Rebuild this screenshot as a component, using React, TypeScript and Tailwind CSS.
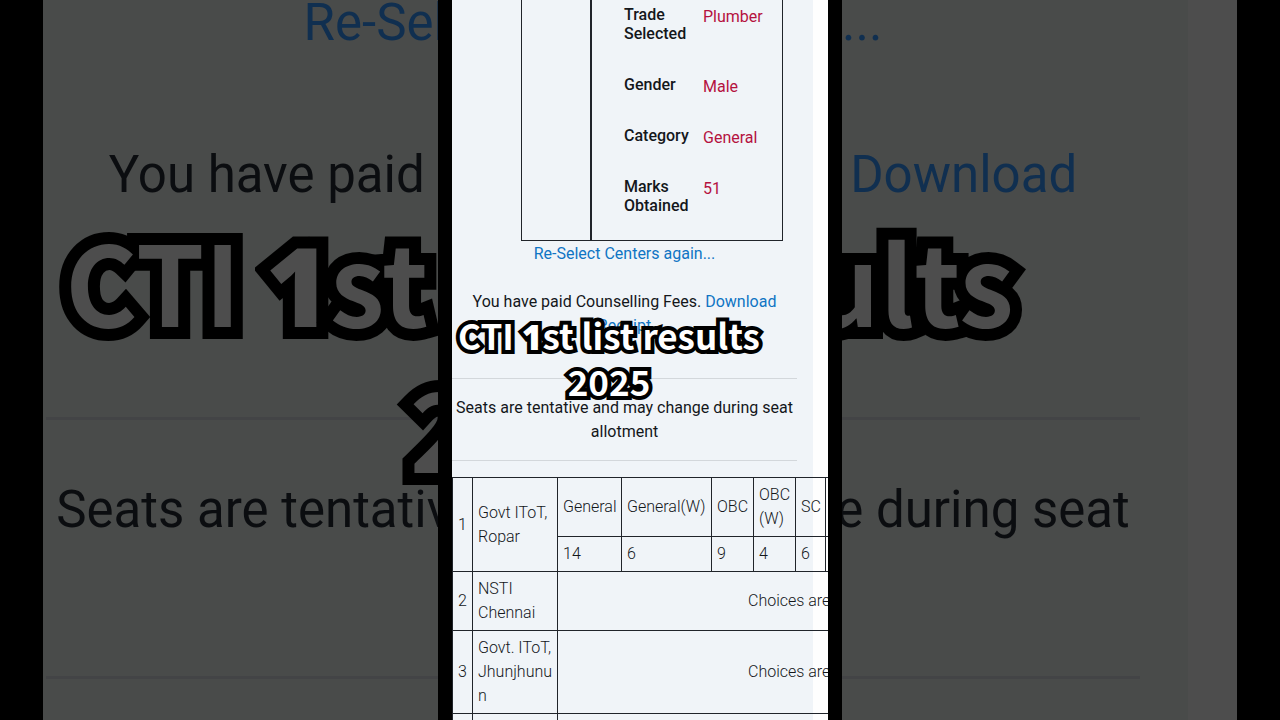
import { clsx } from 'clsx';

const applicant = [
  { label: 'Trade Selected', value: 'Plumber' },
  { label: 'Gender', value: 'Male' },
  { label: 'Category', value: 'General' },
  { label: 'Marks Obtained', value: '51' },
];

const seats = [
  { quota: 'General', count: 14, width: 'w-[64px]' },
  { quota: 'General(W)', count: 6, width: 'w-[90px]' },
  { quota: 'OBC', count: 9, width: 'w-[42px]' },
  { quota: 'OBC (W)', count: 4, width: 'w-[42px]' },
  { quota: 'SC', count: 6, width: 'w-[30px]' },
  { quota: '', count: '', width: 'w-[41px]' },
];

const otherCenters = [
  { no: 2, name: 'NSTI Chennai' },
  { no: 3, name: 'Govt. IToT, Jhunjhunun' },
];

const Caption = ({ className }: { className: string }) => (
  <p
    className={clsx(
      "absolute text-center font-['Noto_Sans_CJK_SC',sans-serif] font-bold [paint-order:stroke_fill] whitespace-nowrap",
      className
    )}
  >
    CTI <span className="font-['Open_Sans',sans-serif] font-extrabold">1</span>st list results
    <br />
    2025
  </p>
);

const ApplicantTable = () => (
  <div className="ml-[69px] flex w-[262px] border border-t-0 border-[#20242a]">
    <div className="w-[70px] border-r-2 border-[#20242a]" />
    <table className="mb-[9px] ml-8 border-collapse text-left">
      <tbody>
        {applicant.map(({ label, value }, i) => (
          <tr key={label} className="align-top">
            <th
              scope="row"
              className={clsx('w-[79px] pr-3 pb-4 leading-[19px] font-medium', i === 0 ? 'pt-[5px]' : 'pt-4')}
            >
              {label}
            </th>
            <td className={clsx('pb-2 leading-6 text-[#b5123f]', i === 0 ? 'pt-[5px]' : 'pt-4')}>{value}</td>
          </tr>
        ))}
      </tbody>
    </table>
  </div>
);

const SeatTable = () => (
  <table className="mt-4 w-[414px] table-fixed border-collapse font-light [&_td]:border [&_td]:border-[#20242a] [&_td]:p-[5px]">
    <colgroup>
      <col className="w-5" />
      <col className="w-[85px]" />
      {seats.map(({ quota, width }) => (
        <col key={quota} className={width} />
      ))}
    </colgroup>
    <tbody>
      <tr>
        <td rowSpan={2}>1</td>
        <td rowSpan={2}>Govt IToT, Ropar</td>
        {seats.map(({ quota }) => (
          <td key={quota}>{quota}</td>
        ))}
      </tr>
      <tr>
        {seats.map(({ quota, count }) => (
          <td key={quota}>{count}</td>
        ))}
      </tr>
      {otherCenters.map(({ no, name }) => (
        <tr key={no}>
          <td>{no}</td>
          <td className="break-words">{name}</td>
          <td colSpan={6}>
            <span className="pl-[185px] whitespace-nowrap">Choices are</span>
          </td>
        </tr>
      ))}
      <tr className="h-[59px]">
        <td />
        <td />
        <td colSpan={6} />
      </tr>
    </tbody>
  </table>
);

const CounsellingPage = () => (
  <main className="relative h-screen w-[404px] overflow-hidden border-x-[14px] border-black bg-[#fefefe] text-base leading-6 text-[#14171b]">
    <div className="h-full w-[361px] bg-[#f0f4f8]">
      <div className="w-[345px] text-center">
        <ApplicantTable />
        <a href="#centers" className="mt-px block text-[#0f75c4]">
          Re-Select Centers again...
        </a>
        <p className="mt-6">
          You have paid Counselling Fees.{' '}
          <a href="#receipt" className="text-[#0f75c4]">
            Download
            <br />
            Receipt
          </a>
        </p>
        <hr className="mt-10 mb-[17px] border-[#d3d7db]" />
        <p>
          Seats are tentative and may change during seat
          <br />
          allotment
        </p>
        <hr className="mt-4 border-[#d3d7db]" />
      </div>
      <SeatTable />
    </div>
    <Caption className="top-[313px] left-0 w-[314px] text-[35px] leading-[44px] text-white [-webkit-text-stroke:8px_black]" />
  </main>
);

// Enlarged, dimmed copy of the page that fills the space beside it
const Backdrop = () => (
  <div
    aria-hidden="true"
    className="relative h-screen w-full max-w-[1194px] overflow-hidden bg-[#4d4d4d] text-[51px] leading-[76px] text-[#0b0d10]"
  >
    <div className="mr-[49px] h-full overflow-hidden bg-[#494b4a]">
      <div className="-mt-[15px] mr-12 ml-[3px] flex flex-col text-center whitespace-nowrap">
        <p className="text-[#102f50]">Re-Select Centers again...</p>
        <p className="mt-[76px]">
          You have paid Counselling Fees. <span className="text-[#102f50]">Download</span>
        </p>
        <hr className="mt-[204px] mb-[52px] border-t-[3px] border-[#434446]" />
        <p>Seats are tentative and may change during seat</p>
        <hr className="mt-[128px] border-t-[3px] border-[#434446]" />
      </div>
    </div>
    <Caption className="top-[209px] left-0 w-[993px] text-[110px] leading-[141px] text-[#4d4d4d] [-webkit-text-stroke:24px_black]" />
  </div>
);

export default function App() {
  return (
    <div className="grid h-screen justify-items-center overflow-hidden bg-black font-['Roboto',sans-serif] [&>*]:[grid-area:1/1]">
      <Backdrop />
      <CounsellingPage />
    </div>
  );
}
